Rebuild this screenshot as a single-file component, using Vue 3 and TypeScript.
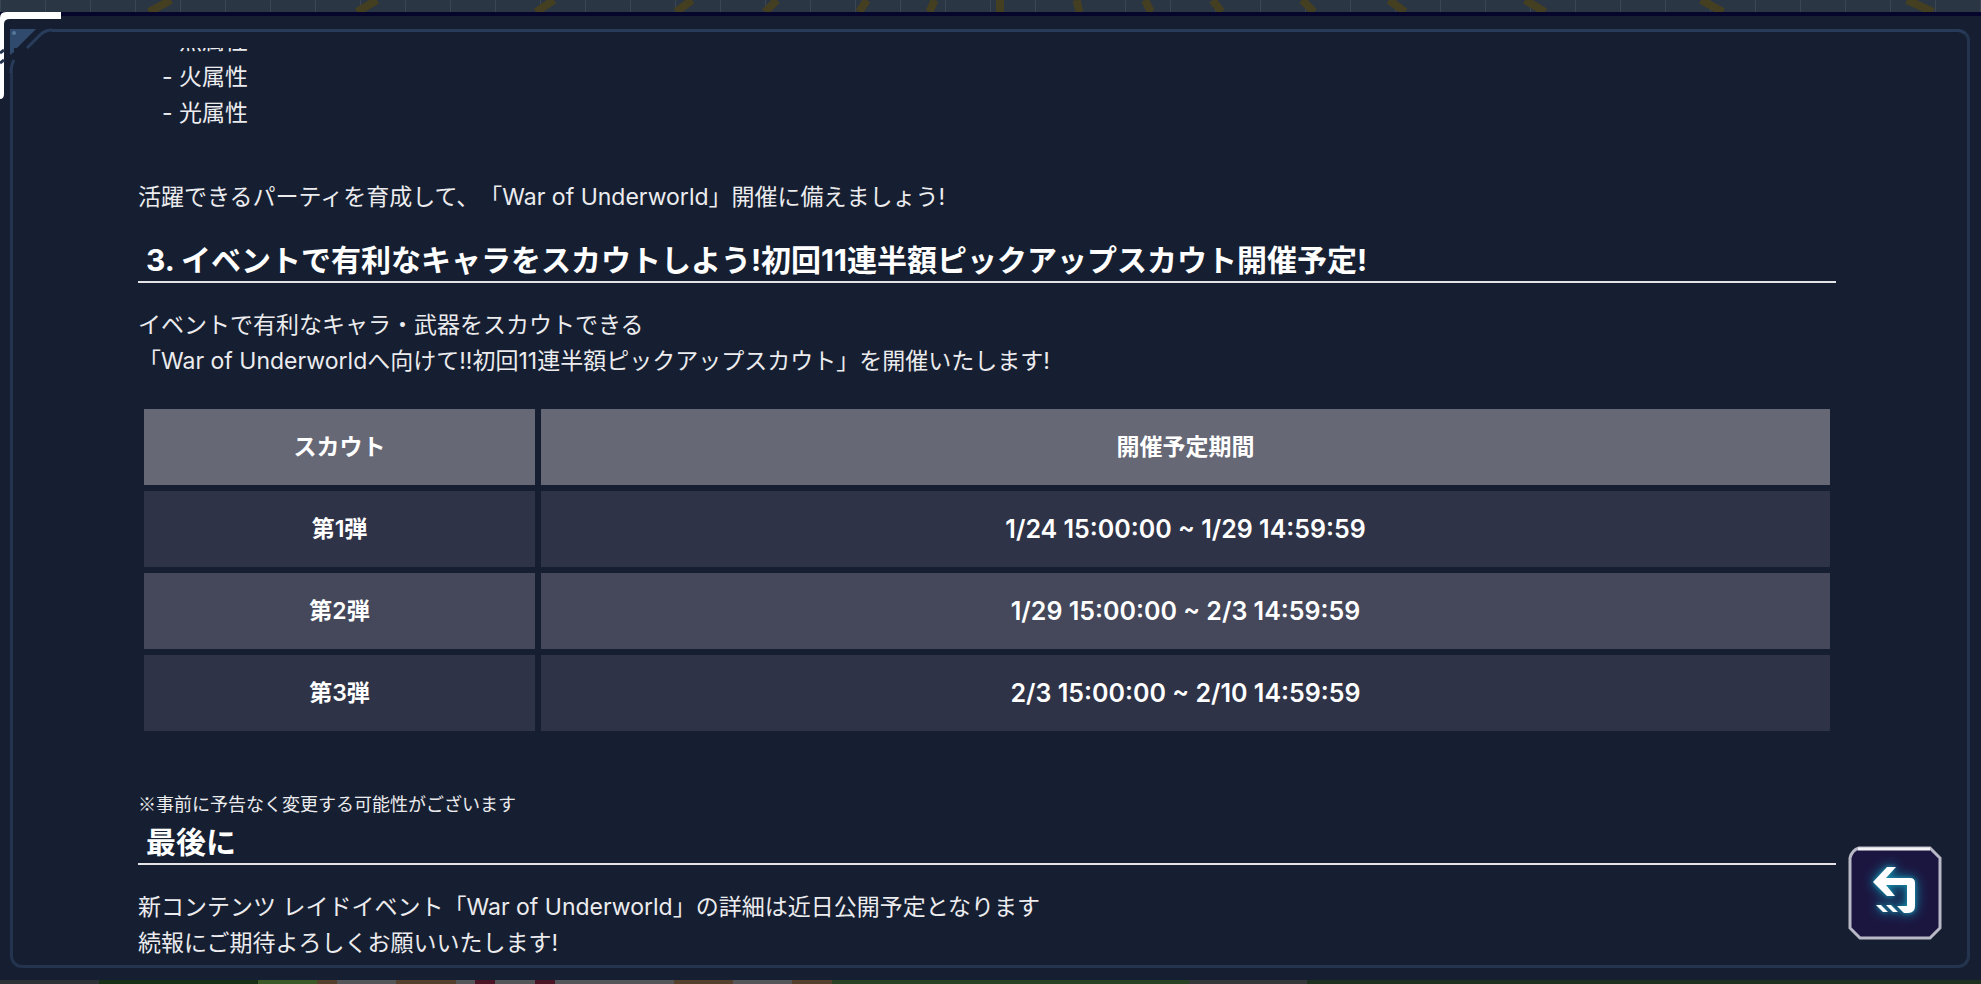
<script setup lang="ts">
interface ScoutRow {
  name: string
  period: string
}

interface Beam {
  x: number
  lean: number
}

const attributes: string[] = ['無属性', '火属性', '光属性']

const scouts: ScoutRow[] = [
  { name: '第1弾', period: '1/24 15:00:00 ~ 1/29 14:59:59' },
  { name: '第2弾', period: '1/29 15:00:00 ~ 2/3 14:59:59' },
  { name: '第3弾', period: '2/3 15:00:00 ~ 2/10 14:59:59' },
]

// Floor markings that fan out from the middle of the backdrop
const beams: Beam[] = [
  { x: 160, lean: -22 },
  { x: 367, lean: -20 },
  { x: 545, lean: -18 },
  { x: 684, lean: -16 },
  { x: 771, lean: -12 },
  { x: 863, lean: -8 },
  { x: 932, lean: -5 },
  { x: 1000, lean: 0 },
  { x: 1078, lean: 3 },
  { x: 1148, lean: 6 },
  { x: 1217, lean: 9 },
  { x: 1308, lean: 12 },
  { x: 1397, lean: 16 },
  { x: 1535, lean: 20 },
  { x: 1712, lean: 22 },
  { x: 1920, lean: 26 },
]
</script>

<template>
  <div class="screen">
    <svg class="backdrop" viewBox="0 0 1981 12" preserveAspectRatio="none" aria-hidden="true">
      <path
        v-for="beam in beams"
        :key="beam.x"
        :d="`M${beam.x - beam.lean / 2} 0L${beam.x + beam.lean / 2} 12`"
        stroke="#453f22"
        stroke-width="8"
      />
    </svg>

    <section class="panel">
      <div class="frame">
        <main class="viewport">
          <article class="notice">
            <ul class="attributes">
              <li v-for="item in attributes" :key="item">- {{ item }}</li>
            </ul>
            <p class="lead">活躍できるパーティを育成して、「War of Underworld」開催に備えましょう!</p>

            <h2>3. イベントで有利なキャラをスカウトしよう!初回11連半額ピックアップスカウト開催予定!</h2>
            <p class="body">
              イベントで有利なキャラ・武器をスカウトできる<br />
              「War of Underworldへ向けて!!初回11連半額ピックアップスカウト」を開催いたします!
            </p>

            <table>
              <thead>
                <tr>
                  <th scope="col" class="name">スカウト</th>
                  <th scope="col">開催予定期間</th>
                </tr>
              </thead>
              <tbody>
                <tr v-for="scout in scouts" :key="scout.name">
                  <th scope="row">{{ scout.name }}</th>
                  <td>{{ scout.period }}</td>
                </tr>
              </tbody>
            </table>

            <p class="note">※事前に予告なく変更する可能性がございます</p>
            <h2>最後に</h2>
            <p class="body">
              新コンテンツ レイドイベント「War of Underworld」の詳細は近日公開予定となります<br />
              続報にご期待よろしくお願いいたします!
            </p>
          </article>
        </main>
      </div>

      <svg class="corner" width="64" height="90" viewBox="0 0 64 90" aria-hidden="true">
        <path d="M8 15H52V36H14V60H8Z" fill="#161f31" />
        <path d="M10 17H36L17 36H14V40L10 43Z" fill="#304a6e" />
        <circle cx="14" cy="21" r="2" fill="#56789a" />
        <path d="M27 36L40 23Q45 18 52 18" fill="none" stroke="#283b5b" stroke-width="3" />
        <path d="M14 48Q11 53 11 61" fill="none" stroke="#283b5b" stroke-width="3" />
        <path d="M0 6Q0 0 6 0H61V7H10Q4 7 4 12V82Q4 87 0 87Z" fill="#fff" />
        <path d="M0 41L4 38M0 51L4 48" stroke="#25344e" stroke-width="3" />
      </svg>

      <button class="back" type="button" aria-label="戻る">
        <svg width="94" height="94" viewBox="0 0 94 94" aria-hidden="true">
          <path d="M11 2H82L92 12V82L82 92H12L2 82V12Q4 4 11 2Z" fill="#1b1640" stroke="#b9b8c6" stroke-width="3" />
          <path d="M10 3H82" stroke="#f4f4f8" stroke-width="3" />
          <g class="glow" fill="#fff">
            <path d="M25 36L39 21H48L38 32H62Q67 32 67 37V60Q67 67 60 67H56L49 60H59V39H38L47 50H39Z" />
            <path d="M28 59H33L40 66H35ZM38 59H43L50 66H45Z" />
          </g>
        </svg>
      </button>
    </section>
  </div>
</template>

<style>
body {
  margin: 0;
  background: #161f31;
}
</style>

<style scoped>
.screen {
  display: flex;
  flex-direction: column;
  height: 100vh;
  overflow: hidden;
  background:
    linear-gradient(90deg, #2c3236 0 5%, #193018 5% 13%, #3c5a28 13% 16%, #54402c 16% 17%, #55565a 17% 20%, #54402c 20% 23%, #55565a 23% 24%, #4a1424 24% 25%, #55565a 25% 27%, #4a1424 27% 28%, #55565a 28% 34%, #54402c 34% 37%, #55565a 37% 40%, #54402c 40% 42%, #2a4224 42% 60%, #34383a 60% 66%, #1e3020 66%) bottom / 100% 4px no-repeat,
    repeating-linear-gradient(90deg, #3a4653 0 1px, transparent 1px 45px) top / 100% 12px no-repeat,
    #2b3644;
}

.backdrop {
  display: block;
  flex: none;
  width: 100%;
  height: 12px;
}

.panel {
  position: relative;
  display: flex;
  flex: 1;
  min-height: 0;
  margin-bottom: 4px;
  padding: 13px 11px 12px 10px;
  border-top: 4px solid #06062c;
  background: #161f31;
  color: #fff;
  font-family: Inter, "Noto Sans CJK JP", sans-serif;
  text-spacing-trim: space-all;
}

.frame {
  display: flex;
  flex: 1;
  min-width: 0;
  border: 3px solid #24344f;
  border-top-color: #283b5b;
  border-radius: 12px;
}

.viewport {
  flex: 1;
  margin-top: 16px;
  overflow: hidden;
}

.notice {
  margin: -25px 131px 0 125px;
}

ul,
p {
  margin: 0;
  color: #ececef;
  font-size: 23px;
  line-height: 36px;
}

.attributes {
  padding: 0 0 0 24px;
  list-style: none;
}

.lead {
  margin-top: 48px;
}

h2 {
  margin: 0;
  padding: 0 8px;
  border-bottom: 2px solid #e4e4e8;
  font-size: 30px;
  font-weight: 700;
  line-height: 42px;
}

.lead + h2 {
  margin-top: 24px;
}

.body {
  padding-top: 24px;
}

table {
  width: 100%;
  margin-top: 24px;
  border-spacing: 6px;
  table-layout: fixed;
  line-height: 36px;
}

th,
td {
  padding: 20px 0;
  background: #2f3347;
  font-size: 23px;
  font-weight: 600;
  text-align: center;
}

td {
  font-size: 25px;
}

.name {
  width: 391px;
}

thead th {
  background: #666876;
}

tbody tr:nth-child(even) > * {
  background: #44485a;
}

.note {
  margin-top: 48px;
  font-family: "Noto Sans CJK JP", sans-serif;
  font-size: 18px;
  line-height: 36px;
}

.back {
  position: absolute;
  right: 39px;
  bottom: 40px;
  width: 94px;
  height: 94px;
  padding: 0;
  border: 0;
  background: none;
  cursor: pointer;
}

.back svg {
  display: block;
}

.glow {
  filter: drop-shadow(0 0 2px #1a90b0) drop-shadow(0 0 6px #108aa8);
}

.corner {
  position: absolute;
  top: -4px;
  left: 0;
}
</style>
